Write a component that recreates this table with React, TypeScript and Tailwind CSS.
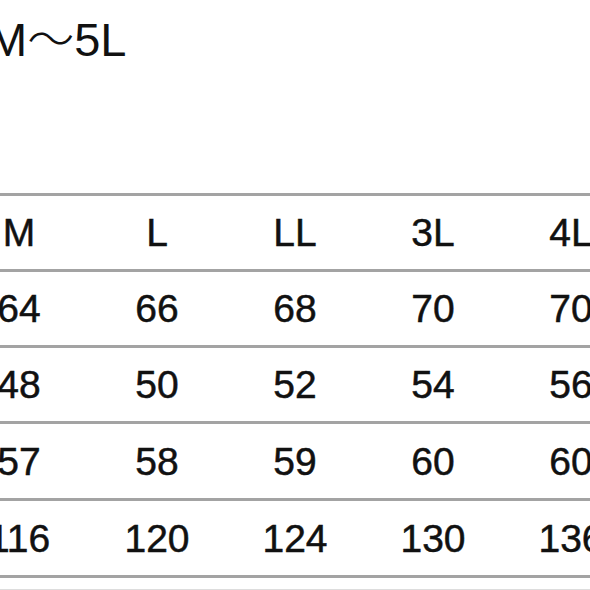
const header = ["M", "L", "LL", "3L", "4L"];

const rows: { cells: string[]; h: string }[] = [
  { cells: ["64", "66", "68", "70", "70"], h: "h-[76px]" },
  { cells: ["48", "50", "52", "54", "56"], h: "h-[76px]" },
  { cells: ["57", "58", "59", "60", "60"], h: "h-[77px]" },
  { cells: ["116", "120", "124", "130", "136"], h: "h-[77px]" },
];

function Row({ cells, h }: { cells: string[]; h: string }) {
  return (
    <div className={`flex items-center border-t-[3px] border-[#a3a3a3] ${h}`}>
      {cells.map((c, i) => (
        <div key={i} className="w-[138px] shrink-0 text-center">
          {c}
        </div>
      ))}
    </div>
  );
}

export default function App() {
  return (
    <div className="h-[590px] w-[590px] overflow-hidden bg-white font-['Liberation_Sans',Arial,sans-serif] text-[#111]">
      <p className="ml-[-12px] h-[62px] pt-[16px] text-[47px] leading-none whitespace-nowrap">
        M<span className="font-['Noto_Sans_CJK_JP',sans-serif] font-light leading-[0]">～</span>5L
      </p>

      <div className="mt-[131px] ml-[-50px] w-[700px] text-[39px] leading-none [-webkit-text-stroke:0.5px_#111]">
        <Row cells={header} h="h-[76px]" />
        {rows.map((r) => (
          <Row key={r.cells[0]} cells={r.cells} h={r.h} />
        ))}
        <div className="h-[14px] border-t-[3px] border-[#a3a3a3]" />
        <div className="border-t border-[#dddddd]" />
      </div>
    </div>
  );
}
